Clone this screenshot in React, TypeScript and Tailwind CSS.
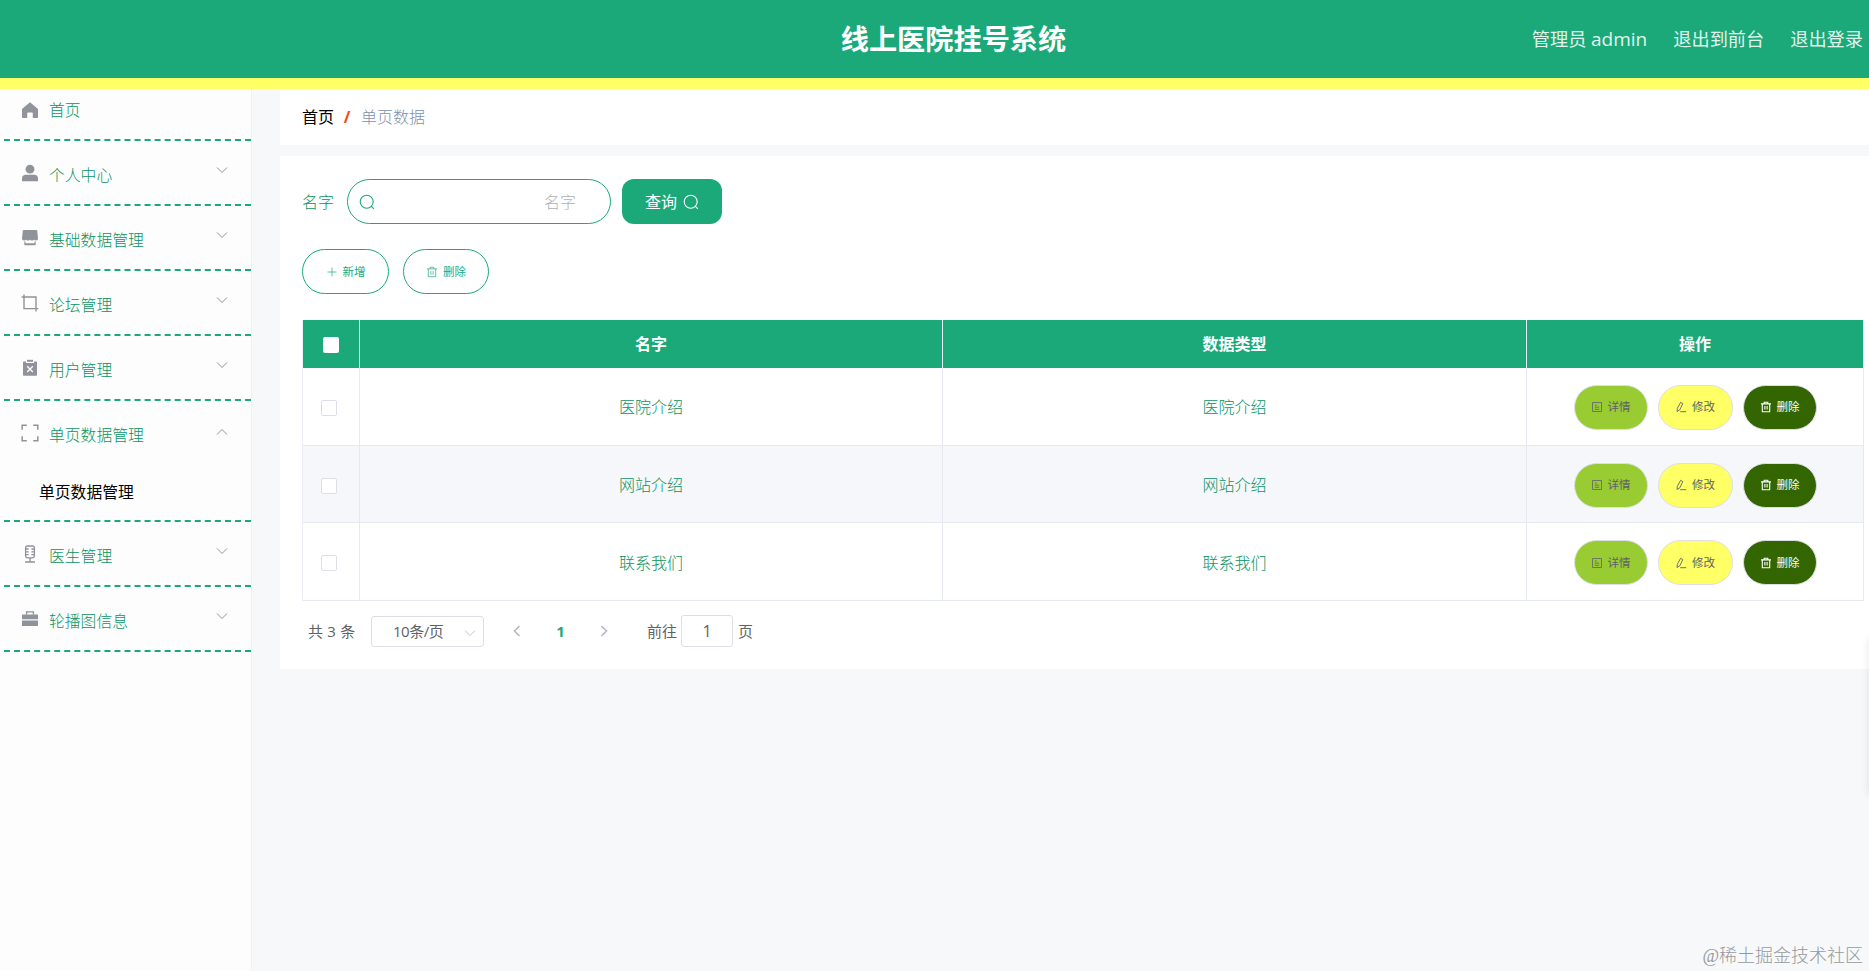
import { useState } from "react";

const menus = [
  { name: "个人中心", icon: "user", children: [] },
  { name: "基础数据管理", icon: "shop", children: [] },
  { name: "论坛管理", icon: "crop", children: [] },
  { name: "用户管理", icon: "order", children: [] },
  { name: "单页数据管理", icon: "full", children: ["单页数据管理"] },
  { name: "医生管理", icon: "mic", children: [] },
  { name: "轮播图信息", icon: "case", children: [] },
];

const rows = [
  { name: "医院介绍", type: "医院介绍" },
  { name: "网站介绍", type: "网站介绍" },
  { name: "联系我们", type: "联系我们" },
];

function MenuIcon({ name }: { name: string }) {
  return (
    <svg viewBox="0 0 18 18" className="w-[18px] h-[18px] shrink-0 text-[#909399]" fill="currentColor">
      {name === "home" && <path d="M9 1.2 17 8v8.2a.8.8 0 0 1-.8.8h-4.4v-4.6a.8.8 0 0 0-.8-.8H7a.8.8 0 0 0-.8.8V17H1.8a.8.8 0 0 1-.8-.8V8z" />}
      {name === "user" && (
        <>
          <circle cx="9" cy="5.2" r="4.4" />
          <path d="M1 16.6v-2.4c0-2.2 1.6-3.4 3.6-3.4h8.8c2 0 3.6 1.2 3.6 3.4v2.4c0 .4-.2.6-.6.6H1.6c-.4 0-.6-.2-.6-.6z" />
        </>
      )}
      {name === "shop" && (
        <>
          <path d="M2.6 1h12.8c.4 0 .7.2.8.6L17 9.6c0 1.2-.8 2-1.9 2-1 0-1.7-.5-2-1.2-.4.7-1.1 1.2-2.1 1.2s-1.7-.5-2-1.2c-.3.7-1 1.2-2 1.2s-1.7-.5-2.1-1.2c-.3.7-1 1.2-2 1.2-1.1 0-1.9-.8-1.9-2l.8-8c.1-.4.4-.6.8-.6z" />
          <path d="M3.3 12.6h1.2v1.6h9v-1.6h1.2v2.9c0 .5-.3.8-.8.8H4.1c-.5 0-.8-.3-.8-.8z" />
        </>
      )}
      {name === "crop" && <path d="M3 .6v14h14.4M.6 3H15v14.4" fill="none" stroke="currentColor" strokeWidth="1.4" />}
      {name === "order" && (
        <>
          <path d="M2.8 2.4H5V4h8V2.4h2.2c.5 0 .8.3.8.8V16c0 .5-.3.8-.8.8H2.8c-.5 0-.8-.3-.8-.8V3.2c0-.5.3-.8.8-.8z" />
          <path d="M6 .8h6v2H6z" />
          <path d="m6.2 7.2 5.6 5.8m0-5.8L6.2 13" fill="none" stroke="#fdfdfd" strokeWidth="1.3" />
        </>
      )}
      {name === "full" && <path d="M1.2 5.8V1.2h4.6m6.4 0h4.6v4.6m0 6.4v4.6h-4.6m-6.4 0H1.2v-4.6" fill="none" stroke="currentColor" strokeWidth="1.5" />}
      {name === "mic" && (
        <>
          <rect x="4.6" y="1" width="8.8" height="11.8" rx="1.8" fill="none" stroke="currentColor" strokeWidth="1.3" />
          <path d="M4.6 4h3M4.6 6.8h3M4.6 9.6h3M10.4 4h3M10.4 6.8h3M10.4 9.6h3M9 12.8V17M4 17h10" fill="none" stroke="currentColor" strokeWidth="1.3" />
        </>
      )}
      {name === "case" && (
        <>
          <path d="M5.6 4.6V1.8h6.8v2.8" fill="none" stroke="currentColor" strokeWidth="1.3" />
          <path d="M1.6 4.4h14.8c.4 0 .6.2.6.6v4.2H1V5c0-.4.2-.6.6-.6zM1 10.4h16v5c0 .4-.2.6-.6.6H1.6c-.4 0-.6-.2-.6-.6z" />
        </>
      )}
    </svg>
  );
}

function Arrow({ className, d }: { className: string; d: string }) {
  return (
    <svg viewBox="0 0 12 12" className={className} fill="none" stroke="currentColor">
      <path d={d} />
    </svg>
  );
}

function SearchIcon({ className }: { className: string }) {
  return (
    <svg viewBox="0 0 16 16" className={className} fill="none" stroke="currentColor" strokeWidth="1.1">
      <circle cx="7.7" cy="7.7" r="6.5" />
      <path d="m12.2 12.2 2.6 2.6" />
    </svg>
  );
}

function TrashIcon({ width }: { width: number }) {
  return (
    <svg viewBox="0 0 12 12" className="w-3 h-3" fill="none" stroke="currentColor" strokeWidth={width}>
      <path d="M1 2.9h10M4.2 2.7V1.3h3.6v1.4M2.3 3v7.7h7.4V3M4.9 5v3.6M7.1 5v3.6" />
    </svg>
  );
}

function DetailIcon() {
  return (
    <svg viewBox="0 0 12 12" className="w-3 h-3" fill="none" stroke="currentColor" strokeWidth="0.8">
      <path d="M1.5 1.5h9v9h-9zM3.8 4.1h2M3.8 6.2h4.4M3.8 8.3h4.4" />
    </svg>
  );
}

function EditIcon() {
  return (
    <svg viewBox="0 0 12 12" className="w-3 h-3" fill="none" stroke="currentColor" strokeWidth="0.9">
      <path d="M5.6 1.3 7.8 2.6 4.8 8.8 2 10.5 2.3 7.4zM5.2 10.7h6" />
    </svg>
  );
}

export default function App() {
  const [selected, setSelected] = useState<number[]>([]);

  const toggle = (i: number) => {
    setSelected(selected.includes(i) ? selected.filter(s => s !== i) : [...selected, i]);
  };

  return (
    <div className="relative flex h-[971px] w-full flex-col overflow-hidden bg-[#f6f8fa] font-['Open_Sans','Noto_Sans_CJK_SC',sans-serif] text-base font-light leading-6">

      {/* Header */}
      <header className="grid h-[89px] shrink-0 grid-cols-[1fr_auto_1fr] items-center border-b-[11px] border-[#ffff66] bg-[#1ba97a] text-white">
        <div />
        <h1 className="ml-[38px] text-[28.2px] font-bold leading-none">线上医院挂号系统</h1>
        <div className="flex justify-end gap-[26px] pr-[6px] pb-px text-[18.2px] font-normal text-[#e0f5ec]">
          <span>管理员 <span className="text-[19px]">admin</span></span>
          <span>退出到前台</span>
          <span>退出登录</span>
        </div>
      </header>

      <div className="flex min-h-0 flex-1">
        {/* Sidebar */}
        <aside className="w-[252px] shrink-0 border-r border-[#f0f1f2] bg-[#fdfdfd] pl-1 text-[15.8px] text-[#089463]">
          <div className="flex h-[52px] border-b-2 border-dashed border-[#1ba97a] pl-[17px] pt-[9px]">
            <div className="flex h-6 items-center gap-[10px]">
              <MenuIcon name="home" />
              <span>首页</span>
            </div>
          </div>
          {menus.map(m => (
            <div key={m.name} className="border-b-2 border-dashed border-[#1ba97a]">
              <div className="flex h-[63px] items-center gap-[10px] pl-[17px] pr-[23px]">
                <MenuIcon name={m.icon} />
                <span className="flex-1 pt-[5px]">{m.name}</span>
                <Arrow
                  className={m.children.length ? "mb-[2px] h-3 w-3 text-[#909399]" : "mb-[6px] h-3 w-3 text-[#909399]"}
                  d={m.children.length ? "m1 8.5 5-5 5 5" : "m1 3.5 5 5 5-5"}
                />
              </div>
              {m.children.map(c => (
                <div key={c} className="h-14 pl-[35px] pt-[16px] font-normal text-black">{c}</div>
              ))}
            </div>
          ))}
        </aside>

        {/* Content */}
        <main className="ml-7 flex-1">
          <div className="flex h-14 items-start bg-white pl-[22px] pt-[16px]">
            <span className="font-normal text-black">首页</span>
            <span className="ml-[9px] mr-[10px] w-[8px] text-center font-bold text-[#f04a18]">/</span>
            <span className="text-[#8091ab]">单页数据</span>
          </div>

          <section className="mt-[11px] h-[513px] bg-white pl-[22px] pr-[6px] pt-[23px]">
            <div className="flex items-center">
              <label className="text-[#089463]">名字</label>
              <div className="ml-[13px] flex h-[45px] w-[264px] items-center rounded-full border border-[#1ba97a] pl-[11px]">
                <SearchIcon className="h-4 w-4 text-[#1ba97a]" />
                <span className="ml-[169px] text-[#acb0b8]">名字</span>
              </div>
              <button className="ml-[11px] flex h-[45px] w-[100px] items-center justify-center gap-[6px] rounded-xl bg-[#1ba97a] font-normal text-white">
                查询
                <SearchIcon className="h-4 w-4" />
              </button>
            </div>

            <div className="mt-[25px] flex gap-[14px] text-[11.5px] font-normal text-[#1ba97a]">
              <button className="flex h-[45px] w-[87px] items-center justify-center gap-[5px] rounded-full border border-[#1ba97a]">
                <svg viewBox="0 0 12 12" className="h-3 w-3" stroke="currentColor" strokeWidth="0.7">
                  <path d="M6 1.5v9M1.5 6h9" />
                </svg>
                新增
              </button>
              <button className="flex h-[45px] w-[86px] items-center justify-center gap-[5px] rounded-full border border-[#1ba97a]">
                <TrashIcon width={0.7} />
                删除
              </button>
            </div>

            {/* Table */}
            <table className="mt-[26px] w-[1562px] table-fixed border-separate border-spacing-0 border-l border-[#ebeef5] text-center text-[#089463]">
              <colgroup>
                <col className="w-[57px]" />
                <col className="w-[583px]" />
                <col className="w-[584px]" />
                <col />
              </colgroup>
              <thead>
                <tr className="h-12 bg-[#1ba97a] text-white">
                  <th className="border-r border-[#ebeef5] p-0 pt-px">
                    <span className="mx-auto block h-4 w-4 rounded-[2px] bg-white" />
                  </th>
                  <th className="border-r border-[#ebeef5] p-0 font-bold">名字</th>
                  <th className="border-r border-[#ebeef5] p-0 font-bold">数据类型</th>
                  <th className="border-r border-[#ebeef5] p-0 font-bold">操作</th>
                </tr>
              </thead>
              <tbody>
                {rows.map((r, i) => (
                  <tr key={r.name} className="h-[77.7px] even:bg-[#f5f7fa]">
                    <td className="border-b border-r border-[#e6eaf0] p-0 pt-[3px]">
                      <span
                        onClick={() => toggle(i)}
                        className={selected.includes(i) ? "ml-[18px] block h-4 w-4 rounded-[2px] bg-[#1ba97a]" : "ml-[18px] block h-4 w-4 rounded-[2px] border border-[#dcdfe6] bg-white"}
                      />
                    </td>
                    <td className="border-b border-r border-[#e6eaf0] p-0 pt-[2px]">{r.name}</td>
                    <td className="border-b border-r border-[#e6eaf0] p-0 pt-[2px]">{r.type}</td>
                    <td className="border-b border-r border-[#e6eaf0] p-0 pt-[2px]">
                      <div className="flex justify-center gap-[10px] text-[11.5px] font-normal text-[#606266]">
                        <button className="flex h-[45px] w-[74px] items-center justify-center gap-[5px] rounded-full border border-[#dcdfe6] bg-[#99cc33]">
                          <DetailIcon />
                          详情
                        </button>
                        <button className="flex h-[45px] w-[75px] items-center justify-center gap-[5px] rounded-full border border-[#dcdfe6] bg-[#ffff66]">
                          <EditIcon />
                          修改
                        </button>
                        <button className="flex h-[45px] w-[74px] items-center justify-center gap-[5px] rounded-full border border-[#dcdfe6] bg-[#336600] text-white">
                          <TrashIcon width={1.1} />
                          删除
                        </button>
                      </div>
                    </td>
                  </tr>
                ))}
              </tbody>
            </table>

            {/* Pagination */}
            <div className="mt-[14px] flex items-center pl-[6px] text-[15px] font-normal text-[#606266]">
              <span className="w-[63px] tracking-[0.2px]">共 3 条</span>
              <div className="flex h-[31px] w-[113px] items-center justify-between rounded-[3px] border border-[#dcdfe6] pl-[21px] pr-[7px]">
                <span className="tracking-[-0.5px]">10条/页</span>
                <Arrow className="mt-[3px] h-3 w-3 text-[#c0c4cc]" d="m1 3.5 5 5 5-5" />
              </div>
              <Arrow className="ml-[27px] h-3 w-3 stroke-[1.6] text-[#b4b8c0]" d="M8.5 1 3.5 6l5 5" />
              <span className="w-[75px] text-center font-bold text-[#1ba97a]">1</span>
              <Arrow className="h-3 w-3 stroke-[1.6] text-[#b4b8c0]" d="m3.5 1 5 5-5 5" />
              <span className="ml-[37px]">前往</span>
              <span className="ml-1 flex h-8 w-[52px] items-center justify-center rounded-[3px] border border-[#dcdfe6] text-base">1</span>
              <span className="ml-[5px]">页</span>
            </div>
          </section>
        </main>
      </div>

      <div className="absolute left-full top-[638px] h-[158px] w-5 shadow-[0_0_8px_rgba(0,0,0,0.1)]" />
      <div className="absolute bottom-[3px] right-[6px] font-['Liberation_Serif','Noto_Sans_CJK_SC',serif] text-[18px] font-light text-[#96989b]">
        @稀土掘金技术社区
      </div>
    </div>
  );
}
